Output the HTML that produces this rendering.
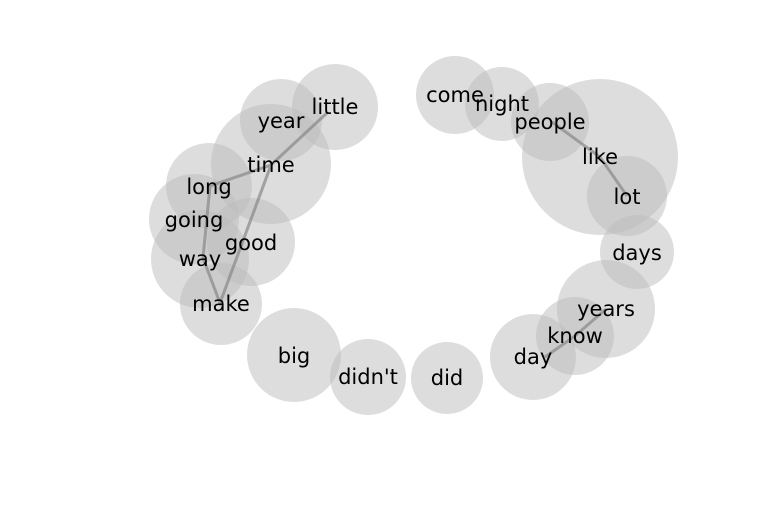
<!DOCTYPE html>
<html><head><style>
html,body{margin:0;padding:0;background:#fff;}
svg text{font-family:"DejaVu Sans","Liberation Sans",sans-serif;font-size:21px;fill:#000;text-anchor:middle;dominant-baseline:central;}
</style></head><body>
<svg width="768" height="500" xmlns="http://www.w3.org/2000/svg">
<g fill="#bbb" fill-opacity="0.5">
<circle cx="335" cy="107" r="43"/>
<circle cx="281" cy="120" r="41"/>
<circle cx="271" cy="164" r="60"/>
<circle cx="209" cy="186" r="43"/>
<circle cx="194" cy="219" r="45"/>
<circle cx="251" cy="242" r="44"/>
<circle cx="200" cy="259" r="49"/>
<circle cx="221" cy="304" r="41"/>
<circle cx="294" cy="355" r="47"/>
<circle cx="368" cy="377" r="38"/>
<circle cx="447" cy="378" r="36"/>
<circle cx="533" cy="357" r="43"/>
<circle cx="575" cy="336" r="39"/>
<circle cx="606" cy="309" r="49"/>
<circle cx="637" cy="252" r="37"/>
<circle cx="600" cy="157" r="78"/>
<circle cx="627" cy="196" r="40"/>
<circle cx="550" cy="122" r="39"/>
<circle cx="502" cy="104" r="37"/>
<circle cx="455" cy="95" r="39"/>
</g>
<g stroke="#888" stroke-opacity="0.7" stroke-width="3" fill="none">
<polyline points="328,112 271,165 210,186 203,258 220,303 271,165"/>
<polyline points="552,122 600,157 627,196"/>
<polyline points="606,309 575,336 545,357"/>
</g>
<text x="335" y="107">little</text>
<text x="281" y="121">year</text>
<text x="271" y="165">time</text>
<text x="209" y="187">long</text>
<text x="194" y="220">going</text>
<text x="251" y="243">good</text>
<text x="200" y="259">way</text>
<text x="221" y="304">make</text>
<text x="294" y="356">big</text>
<text x="368" y="377">didn't</text>
<text x="447" y="378">did</text>
<text x="533" y="357">day</text>
<text x="575" y="336">know</text>
<text x="606" y="309">years</text>
<text x="637" y="253">days</text>
<text x="627" y="197">lot</text>
<text x="600" y="157">like</text>
<text x="550" y="122">people</text>
<text x="502" y="104">night</text>
<text x="455" y="95">come</text>
</svg>
</body></html>
